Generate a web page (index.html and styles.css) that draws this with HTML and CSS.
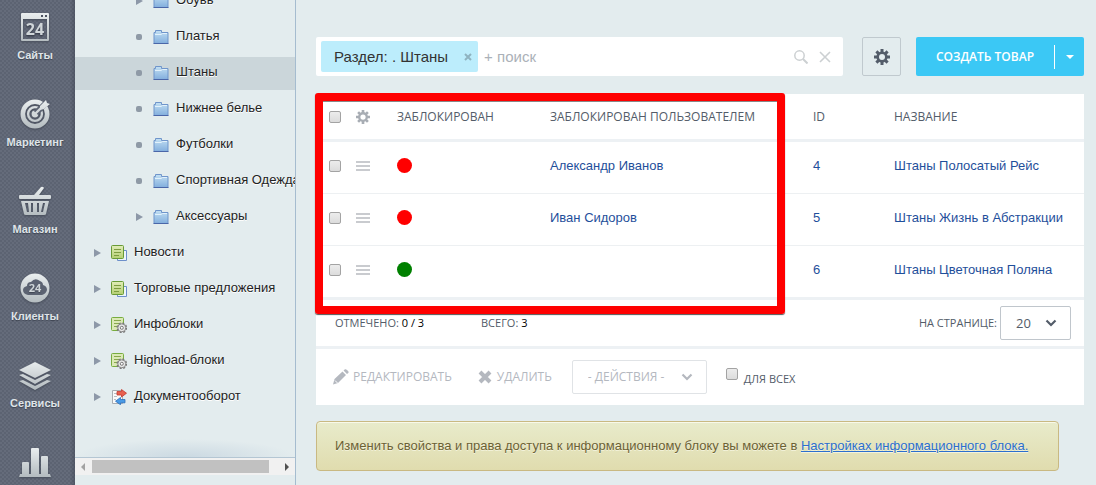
FILE: index.html
```html
<!DOCTYPE html>
<html lang="ru">
<head>
<meta charset="utf-8">
<meta name="viewport" content="width=device-width, initial-scale=1">
<title>Штаны</title>
<link rel="stylesheet" href="styles.css">
</head>
<body>
<svg class="defs" aria-hidden="true">
  <defs>
    <linearGradient id="silver" x1="0" y1="0" x2="0" y2="32" gradientUnits="userSpaceOnUse"><stop offset="0" stop-color="#edf1f2"/><stop offset="1" stop-color="#b1b9bd"/></linearGradient>
    <linearGradient id="blue" x1="0" y1="0" x2="0" y2="1"><stop offset="0" stop-color="#c3e0f3"/><stop offset="1" stop-color="#82aedd"/></linearGradient>
    <linearGradient id="green" x1="0" y1="0" x2="0" y2="1"><stop offset="0" stop-color="#e1edb8"/><stop offset="1" stop-color="#b4cf72"/></linearGradient>
    <symbol id="folder" viewBox="0 0 16 16">
      <path d="M1 3.5V14.5H15V3.5H8.500V1.500H2.500V3.500Z" fill="url(#blue)" stroke="#6f95cb"/>
      <path d="M2 5.500H8L9.500 4.500H14" fill="none" stroke="#e2f1fb"/>
      <path d="M.5 14.500H15.500" stroke="#4a66a8"/>
    </symbol>
    <symbol id="pages" viewBox="0 0 16 16">
      <path d="M6.500 5.500H15.500V15.500H6.500Z" fill="#eef5fb" stroke="#6d8fca"/>
      <rect x=".5" y=".5" width="12" height="13" rx="1" fill="url(#green)" stroke="#689a35"/>
      <path d="M3 4.500H10M3 7.500H10M3 10.500H8" stroke="#7d9c3f"/>
    </symbol>
    <symbol id="pagegear" viewBox="0 0 16 16">
      <rect x=".5" y=".5" width="12" height="13" rx="1" fill="#dbe9b6" stroke="#78ad3f"/>
      <path d="M3 3.500H10M3 6.500H8M3 9.500H6" stroke="#88a94c"/>
      <circle cx="10.800" cy="10.800" r="4.600" fill="none" stroke="#777" stroke-width="1.500" stroke-dasharray="2 1.600"/>
      <circle cx="10.800" cy="10.800" r="4" fill="#e7e7e7" stroke="#858585"/>
      <circle cx="10.800" cy="10.800" r="1.500" fill="#fff" stroke="#777"/>
    </symbol>
    <symbol id="docflow" viewBox="0 0 16 16">
      <path d="M1.500 1.500H11.500V14.500H1.500Z" fill="#fafafa" stroke="#a9adb2"/>
      <path d="M3 4.500H6M3 7.500H6M3 10.500H5" stroke="#b9bdc2"/>
      <path d="M6 2.500H10.500V.5L15.500 4.200L10.500 8V6H6Z" fill="#e8604f" stroke="#c33a30" stroke-width=".8"/>
      <path d="M14 10.500H9.500V8.500L4.500 12.200L9.500 15.700V13.800H14Z" fill="#4a9be6" stroke="#2b6fba" stroke-width=".8"/>
    </symbol>
    <symbol id="gear" viewBox="0 0 16 16">
      <path d="M8 0V16M0 8H16M2.400 2.400L13.600 13.600M13.600 2.400L2.400 13.600" stroke="currentColor" stroke-width="3"/>
      <circle cx="8" cy="8" r="5.600" fill="currentColor"/>
      <circle cx="8" cy="8" r="3" class="hole"/>
    </symbol>
    <symbol id="chevron" viewBox="0 0 12 8"><path d="M1.500 1.500L6 6L10.500 1.500" fill="none" stroke="currentColor" stroke-width="2.200"/></symbol>
    <symbol id="menu" viewBox="0 0 14 10"><path d="M0 1H14M0 5H14M0 9H14" stroke="currentColor" stroke-width="2"/></symbol>
  </defs>
</svg>
<div class="app">
  <nav class="rail" aria-label="Разделы">
    <a class="rail-item" href="#sites">
      <svg class="rail-icon" viewBox="0 0 32 32" aria-hidden="true"><path fill="url(#silver)" fill-rule="evenodd" d="M3 2H29Q30 2 30 3V29Q30 30 29 30H3Q2 30 2 29V3Q2 2 3 2ZM22 4V6H24V4ZM26 4V6H28V4ZM4 8V28H28V8Z"/><text x="16" y="24" class="rail-num">24</text></svg>
      <span>Сайты</span></a>
    <a class="rail-item" href="#marketing">
      <svg class="rail-icon" viewBox="0 0 32 32" aria-hidden="true"><circle cx="16" cy="16" r="12.200" fill="none" stroke="url(#silver)" stroke-width="4.600"/><circle cx="16" cy="16" r="6.900" fill="none" stroke="url(#silver)" stroke-width="2.400"/><circle cx="16" cy="16" r="3.400" fill="#d2d8da"/><path d="M17 15L29 3" stroke="#5c6372" stroke-width="6"/><path d="M15 17L24 8" stroke="#d2d8da" stroke-width="2.400"/><path d="M21 8L27 2L28 5L31 6L25 11L21 12Z" fill="url(#silver)"/></svg>
      <span>Маркетинг</span></a>
    <a class="rail-item" href="#shop">
      <svg class="rail-icon" viewBox="0 0 32 32" aria-hidden="true"><path fill="url(#silver)" d="M1 10H15L22 2Q24 1 25 3L20 10H31Q32 10 32 11V13Q32 14 31 14H1Q0 14 0 13V11Q0 10 1 10Z"/><path fill="url(#silver)" fill-rule="evenodd" d="M2 16H30L27 29Q27 30 25 30H7Q5 30 5 29ZM6 18L8 27H10L9 18ZM12 18V27H14V18ZM18 18V27H20V18ZM24 18L22 27H24L26 18Z"/></svg>
      <span>Магазин</span></a>
    <a class="rail-item" href="#clients">
      <svg class="rail-icon" viewBox="0 0 32 32" aria-hidden="true"><circle cx="16" cy="16" r="14.500" fill="url(#silver)"/><path fill="#5c6372" d="M9 23Q4 22 4 18Q4 15 8 14Q8 10 12 10Q16 5 21 9Q24 10 24 13Q28 14 28 18Q27 22 23 23Z"/><text x="16" y="20" class="rail-num rail-num-small">24</text></svg>
      <span>Клиенты</span></a>
    <a class="rail-item" href="#services">
      <svg class="rail-icon" viewBox="0 0 32 32" aria-hidden="true"><path fill="url(#silver)" d="M16 3L32 11L16 19L0 11ZM0 16L4 15L16 21L28 15L32 16L16 25ZM0 22L4 21L16 27L28 21L32 22L16 31Z"/></svg>
      <span>Сервисы</span></a>
    <a class="rail-item" href="#analytics" aria-label="Аналитика">
      <svg class="rail-icon" viewBox="0 0 32 32" aria-hidden="true"><path fill="url(#silver)" d="M1 28H3V17Q3 16 4 16H9Q10 16 10 17V28H12V3Q12 2 13 2H19Q20 2 20 3V28H22V11Q22 10 23 10H28Q29 10 29 11V28H31L32 31H0Z"/></svg></a>
  </nav>

  <aside class="tree-panel">
    <ul class="tree">
      <li class="node sub"><i class="arrow"></i><svg class="node-icon"><use href="#folder"/></svg><a href="#n1">Обувь</a></li>
      <li class="node sub"><i class="dot"></i><svg class="node-icon"><use href="#folder"/></svg><a href="#n2">Платья</a></li>
      <li class="node sub selected"><i class="dot"></i><svg class="node-icon"><use href="#folder"/></svg><a href="#n3">Штаны</a></li>
      <li class="node sub"><i class="dot"></i><svg class="node-icon"><use href="#folder"/></svg><a href="#n4">Нижнее белье</a></li>
      <li class="node sub"><i class="dot"></i><svg class="node-icon"><use href="#folder"/></svg><a href="#n5">Футболки</a></li>
      <li class="node sub"><i class="dot"></i><svg class="node-icon"><use href="#folder"/></svg><a href="#n6">Спортивная Одежда</a></li>
      <li class="node sub"><i class="arrow"></i><svg class="node-icon"><use href="#folder"/></svg><a href="#n7">Аксессуары</a></li>
      <li class="node"><i class="arrow"></i><svg class="node-icon"><use href="#pages"/></svg><a href="#n8">Новости</a></li>
      <li class="node"><i class="arrow"></i><svg class="node-icon"><use href="#pages"/></svg><a href="#n9">Торговые предложения</a></li>
      <li class="node"><i class="arrow"></i><svg class="node-icon"><use href="#pagegear"/></svg><a href="#n10">Инфоблоки</a></li>
      <li class="node"><i class="arrow"></i><svg class="node-icon"><use href="#pagegear"/></svg><a href="#n11">Highload-блоки</a></li>
      <li class="node"><i class="arrow"></i><svg class="node-icon"><use href="#docflow"/></svg><a href="#n12">Документооборот</a></li>
    </ul>
    <div class="scrollbar" aria-hidden="true"><i class="scroll-left"></i><i class="scroll-thumb"></i><i class="scroll-right"></i></div>
  </aside>

  <main class="content">
    <div class="toolbar">
      <form class="search" role="search">
        <span class="tag">Раздел: . Штаны
          <button class="tag-close" type="button" aria-label="Убрать фильтр"><svg viewBox="0 0 8 8"><path d="M1 1L7 7M7 1L1 7" stroke="currentColor" stroke-width="2"/></svg></button></span>
        <input class="search-input" type="text" placeholder="+ поиск" aria-label="Поиск">
        <button class="search-btn" type="submit" aria-label="Найти"><svg viewBox="0 0 14 14"><circle cx="5.500" cy="5.500" r="4.700" fill="none" stroke="currentColor" stroke-width="1.500"/><path d="M9 9L13.500 13.500" stroke="currentColor" stroke-width="2"/></svg></button>
        <button class="search-btn" type="reset" aria-label="Очистить"><svg viewBox="0 0 14 14"><path d="M2 2L12 12M12 2L2 12" stroke="currentColor" stroke-width="1.600"/></svg></button>
      </form>
      <button class="settings" type="button" aria-label="Настройки"><svg><use href="#gear"/></svg></button>
      <div class="create">
        <button class="create-main" type="button">СОЗДАТЬ ТОВАР</button>
        <button class="create-more" type="button" aria-label="Ещё"><i></i></button>
      </div>
    </div>

    <section class="panel">
      <table class="grid">
        <colgroup><col class="c-check"><col class="c-menu"><col class="c-lock"><col class="c-user"><col class="c-id"><col></colgroup>
        <thead>
          <tr><th class="check-cell"><input class="check" type="checkbox" aria-label="Выбрать все"></th><th><button class="row-btn gear-btn" type="button" aria-label="Настройка столбцов"><svg><use href="#gear"/></svg></button></th><th>ЗАБЛОКИРОВАН</th><th>ЗАБЛОКИРОВАН ПОЛЬЗОВАТЕЛЕМ</th><th>ID</th><th>НАЗВАНИЕ</th></tr>
        </thead>
        <tbody>
          <tr><td class="check-cell"><input class="check" type="checkbox" aria-label="Выбрать 4"></td><td><button class="row-btn" type="button" aria-label="Действия 4"><svg><use href="#menu"/></svg></button></td><td><i class="status locked"></i></td><td><a href="#u1">Александр Иванов</a></td><td><a href="#p4">4</a></td><td><a href="#p4">Штаны Полосатый Рейс</a></td></tr>
          <tr><td class="check-cell"><input class="check" type="checkbox" aria-label="Выбрать 5"></td><td><button class="row-btn" type="button" aria-label="Действия 5"><svg><use href="#menu"/></svg></button></td><td><i class="status locked"></i></td><td><a href="#u2">Иван Сидоров</a></td><td><a href="#p5">5</a></td><td><a href="#p5">Штаны Жизнь в Абстракции</a></td></tr>
          <tr><td class="check-cell"><input class="check" type="checkbox" aria-label="Выбрать 6"></td><td><button class="row-btn" type="button" aria-label="Действия 6"><svg><use href="#menu"/></svg></button></td><td><i class="status"></i></td><td></td><td><a href="#p6">6</a></td><td><a href="#p6">Штаны Цветочная Поляна</a></td></tr>
        </tbody>
      </table>
      <div class="summary">
        <span class="marked">ОТМЕЧЕНО: <b>0 / 3</b></span>
        <span>ВСЕГО: <b>3</b></span>
        <label class="per-page" for="per-page">НА СТРАНИЦЕ:</label>
        <div class="select select-small"><select id="per-page"><option>20</option><option>50</option></select><svg><use href="#chevron"/></svg></div>
      </div>
      <div class="actions">
        <button class="action edit" type="button" disabled><svg viewBox="0 0 16 16"><path fill="currentColor" d="M0 15.500L1.500 10L9.500 2.500L13 6L5 14ZM10.500 1.500L12 .3Q13 0 14 1L15.300 2.300Q16 3.200 15.300 4L14 5Z"/><path d="M2 11.500L4.500 14" stroke="#fff"/></svg>РЕДАКТИРОВАТЬ</button>
        <button class="action remove" type="button" disabled><svg viewBox="0 0 16 16"><path d="M3 3L13 13M13 3L3 13" stroke="currentColor" stroke-width="4"/></svg>УДАЛИТЬ</button>
        <div class="select select-off"><select aria-label="Действия" disabled><option>- ДЕЙСТВИЯ -</option></select><svg><use href="#chevron"/></svg></div>
        <label class="for-all"><input class="check" type="checkbox"><span>ДЛЯ ВСЕХ</span></label>
      </div>
      <div class="highlight" aria-hidden="true"></div>
    </section>

    <p class="note">Изменить свойства и права доступа к информационному блоку вы можете в <a href="#settings">Настройках информационного блока.</a></p>
  </main>
</div>
</body>
</html>
```

FILE: styles.css
```css
* { box-sizing: border-box; }
body {
  margin: 0;
  font-family: "Liberation Sans", Arial, sans-serif;
  font-size: 13px;
  line-height: 16px;
  background: #e3ecee;
  color: #222;
}
button, input, select { margin: 0; padding: 0; border: 0; background: none; font: inherit; color: inherit; }
button { cursor: pointer; }
button:disabled { cursor: default; }
a { text-decoration: none; color: inherit; }
svg { display: block; }
i { display: block; flex: none; }
.defs { position: absolute; width: 0; height: 0; }
.app { display: flex; height: 100vh; overflow: hidden; }

.rail {
  flex: 0 0 75px;
  padding-right: 5px;
  overflow: hidden;
  background-color: #656c7b;
  background-image:
    linear-gradient(90deg, transparent 70px, rgba(40, 46, 60, .3)),
    radial-gradient(circle at 1px 1px, #5c6372 1px, transparent 1px),
    radial-gradient(circle at 3px 3px, #5c6372 1px, transparent 1px);
  background-size: auto, 4px 4px, 4px 4px;
}
.rail-item {
  display: flex;
  flex-direction: column;
  align-items: center;
  gap: 4px;
  height: 87px;
  padding-top: 11px;
  color: #dfe4e8;
  font-size: 11px;
  font-weight: bold;
  text-shadow: 0 1px 1px #3d4350;
}
.rail-icon { width: 32px; height: 32px; filter: drop-shadow(0 1px 1px #444a57); }
.rail-num { font: bold 16px "Open Sans", sans-serif; text-anchor: middle; fill: #d0d6d9; }
.rail-num-small { font-size: 11px; }

.tree-panel {
  flex: 0 0 221px;
  display: flex;
  flex-direction: column;
  border-right: 1px solid #a5bccf;
  padding-bottom: 10px;
  overflow: hidden;
}
.tree {
  flex: 1;
  list-style: none;
  margin: -15px 0 0;
  padding: 0;
  background: radial-gradient(ellipse 110px 18px at 50% 100%, #cbd9e2, transparent);
}
.node {
  display: flex;
  align-items: center;
  height: 33px;
  margin-bottom: 3px;
  padding: 0 0 4px 19px;
  white-space: nowrap;
  text-shadow: 0 1px 0 #fff;
}
.node.sub { padding-left: 61px; }
.node.selected { background: #cbd6da; }
.node a { margin-left: 7px; }
.node i { margin-top: 2px; }
.node-icon { width: 16px; height: 16px; flex: none; margin-top: 2px; }
.arrow { width: 7px; margin-right: 10px; border: 4px solid transparent; border-left: 7px solid #8d98a8; border-right: 0; }
.dot { width: 6px; height: 6px; margin-right: 11px; border-radius: 2px; background: #8f9aa6; }
.scrollbar {
  display: flex;
  align-items: center;
  justify-content: space-between;
  height: 18px;
  padding: 0 6px;
  border-top: 1px solid #b4c6d3;
  background: #f1f1f1;
}
.scroll-left, .scroll-right { border: 4px solid transparent; }
.scroll-left { border-right-color: #a3a3a3; border-left: 0; }
.scroll-right { border-left-color: #505050; border-right: 0; }
.scroll-thumb { flex: 1; height: 13px; margin: 0 16px 0 7px; background: #c1c1c1; }

.content { flex: 1; min-width: 0; padding: 37px 12px 14px 20px; }
.toolbar { display: flex; height: 39px; margin-bottom: 18px; }
.search {
  flex: 1;
  min-width: 0;
  display: flex;
  align-items: center;
  padding: 0 11px 0 5px;
  border-radius: 2px;
  background: #fff;
  font-size: 15px;
}
.tag {
  display: flex;
  align-items: center;
  gap: 16px;
  height: 31px;
  padding: 0 6px 0 13px;
  border-radius: 2px;
  background: #bcedfc;
  color: #333;
  white-space: nowrap;
}
.tag-close { color: #8fb3c0; }
.tag-close svg { width: 8px; height: 8px; }
.search-input { flex: 1; min-width: 0; margin-left: 6px; outline: 0; }
.search-input::placeholder { color: #abb1b8; opacity: 1; }
.search-btn { margin-left: 10px; color: #ccd0d2; }
.search-btn svg { width: 14px; height: 14px; }
.settings {
  display: grid;
  place-items: center;
  width: 39px;
  margin: 0 15px 0 19px;
  border: 1px solid #c0c9ce;
  border-radius: 2px;
  color: #535c69;
}
.settings svg { width: 16px; height: 16px; fill: #e3ecee; }
.create { display: flex; align-items: center; border-radius: 2px; background: #3bc8f5; color: #fff; font: 600 12px/39px "Open Sans", sans-serif; }
.create-main { width: 138px; height: 39px; }
.create-more { display: grid; place-items: center; width: 30px; height: 24px; border-left: 1px solid #fff; }
.create-more i { border: 4px solid transparent; border-top-color: #fff; border-bottom: 0; }

.panel { position: relative; background: #fff; font-family: "Open Sans", sans-serif; color: #535c69; }
.grid { width: 100%; table-layout: fixed; border-collapse: separate; border-spacing: 0; }
.c-check { width: 40px; }
.c-menu { width: 41px; }
.c-lock { width: 153px; }
.c-user { width: 263px; }
.c-id { width: 81px; }
.grid th, .grid td { padding: 0; text-align: left; vertical-align: middle; white-space: nowrap; }
.grid th { height: 48px; padding-top: 1px; border-bottom: 3px solid #edf1f4; font-size: 12px; font-weight: normal; }
.grid td { height: 52px; padding-bottom: 4px; border-bottom: 1px solid #edf0f2; font-family: "Liberation Sans", Arial, sans-serif; color: #1f4f9b; }
.grid tbody tr:last-child td { height: 54px; border-bottom: 3px solid #edf1f4; }
.grid .check-cell { padding-left: 13px; }
.check {
  appearance: none;
  display: block;
  width: 12px;
  height: 12px;
  border: 1px solid #a3a3a3;
  border-radius: 2px;
  background: linear-gradient(#ececec, #dcdcdc);
}
.check:checked { background: #6da7d8; }
.row-btn { display: block; color: #c9cbcf; }
.row-btn svg { width: 14px; height: 10px; }
.gear-btn { color: #a8adb4; }
.gear-btn svg { width: 14px; height: 14px; fill: #fff; }
.status { width: 15px; height: 15px; border-radius: 50%; background: green; }
.status.locked { background: red; }
.highlight {
  position: absolute;
  top: -1px;
  left: -1px;
  width: 470px;
  height: 221px;
  border: 8px solid red;
  border-radius: 3px;
  box-shadow: 0 1px 1px #555, inset 0 1px 0 #888;
  pointer-events: none;
}
.summary {
  display: flex;
  align-items: center;
  height: 49px;
  padding: 0 13px 0 19px;
  border-bottom: 3px solid #edf1f4;
  font-size: 11px;
  white-space: nowrap;
}
.summary b { font-weight: normal; color: #000; }
.marked { width: 146px; }
.per-page { margin-left: auto; margin-right: 3px; }
.select { display: grid; align-items: center; border: 1px solid #c0c6cc; border-radius: 2px; }
.select select, .select svg { grid-area: 1 / 1; }
.select select { appearance: none; width: 100%; height: 100%; padding-left: 15px; opacity: 1; outline: 0; }
.select svg { justify-self: end; width: 12px; height: 8px; margin-right: 13px; pointer-events: none; }
.select-small { width: 71px; height: 34px; font-size: 13px; }
.actions { display: flex; align-items: center; height: 56px; padding-left: 17px; font-size: 12px; color: #b4b8bf; white-space: nowrap; }
.action { display: flex; align-items: center; gap: 4px; }
.action svg { width: 16px; height: 16px; }
.remove { margin-left: 25px; }
.select-off { width: 135px; height: 34px; margin-left: 20px; border-color: #e0e3e6; }
.for-all { display: flex; gap: 6px; margin-left: 19px; font-size: 11px; color: #535c69; }
.for-all span { padding-top: 3px; }
.note {
  margin: 16px 25px 0 0;
  padding: 16px 18px;
  border: 1px solid #c9b982;
  border-radius: 4px;
  background: linear-gradient(#e8ebcb, #e0dcae);
  box-shadow: inset 0 1px 0 #f8f9ea;
  color: #6b6134;
  text-shadow: 0 1px 0 #f4f3dc;
}
.note a { color: #2b6fce; text-decoration: underline; }
```
